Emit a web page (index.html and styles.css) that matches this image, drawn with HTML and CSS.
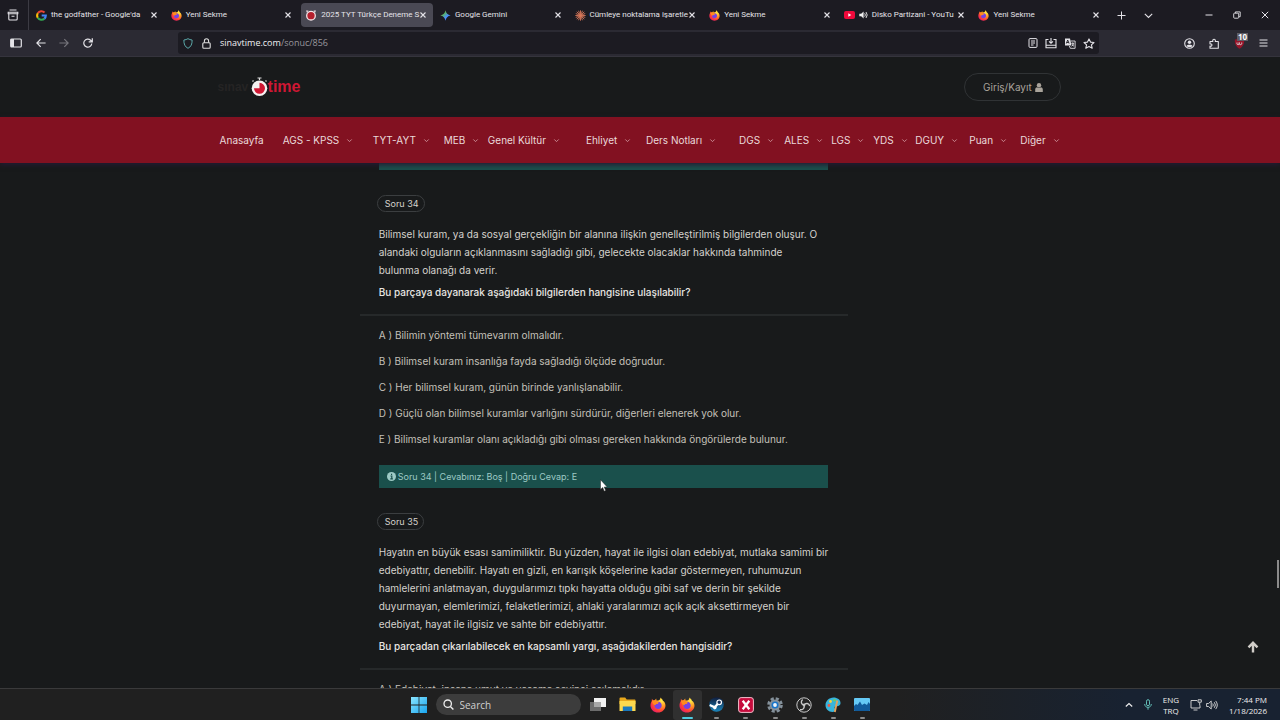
FILE: index.html
```html
<!DOCTYPE html>
<html lang="tr">
<head>
<meta charset="utf-8">
<meta name="viewport" content="width=device-width, initial-scale=1">
<title>2025 TYT Türkçe Deneme Sınavı</title>
<link rel="stylesheet" href="styles.css">
</head>
<body>
<svg class="defs" aria-hidden="true">
  <defs>
    <radialGradient id="fire" cx=".75" cy=".2" r=".95"><stop offset="0" stop-color="#fff04a"/><stop offset=".4" stop-color="#ff9a22"/><stop offset=".72" stop-color="#ff4038"/><stop offset="1" stop-color="#e3166f"/></radialGradient>
    <linearGradient id="win" x2="1" y2="1"><stop offset="0" stop-color="#8be5ff"/><stop offset="1" stop-color="#18a5ef"/></linearGradient>
    <linearGradient id="gem" x2="1" y2="1"><stop offset="0" stop-color="#ef5350"/><stop offset=".35" stop-color="#58b368"/><stop offset=".6" stop-color="#4b8df8"/><stop offset="1" stop-color="#3b7bf0"/></linearGradient>
    <linearGradient id="steamg" x2="0" y2="1"><stop offset="0" stop-color="#101c3c"/><stop offset="1" stop-color="#1b87bd"/></linearGradient>
    <symbol id="firefox" viewBox="0 0 16 16">
      <path fill="url(#fire)" d="M10.1.5c2.2 1.2 2.5 2.5 2.8 3.2.8.2 2.8 2.4 2.6 5.1-.2 3.9-3.4 6.8-7.5 6.8S.5 12.400.5 8.500c0-2.300.8-3.800 1.300-4.500L1.900 1.800l1.400 1.700 1.600-.4L6.200 1.500l.3 1.900h1.700C10.200 3 10.600 1.800 10.100.5z"/>
      <path fill="#7542e5" d="M8 4.800c2.300 0 3.700 1.600 3.700 3.600S10.200 12 8.100 12s-3.700-1.500-3.700-3.400c0-.9.4-1.500.8-1.800l1.900.1c.5 0 .9-.4 1-.8L6.500 5.200z"/>
      <path fill="#ff8a20" d="M1.900 4.100c1.500-1.300 3.500-1 4.700.2l1.700.7c.6.500.3 1.300-.4 1.400l-1.300.4c-.6.200-.5.900-1.300 1.300C3.400 8 2.300 6.500 1.900 4.100z"/>
    </symbol>
    <symbol id="close" viewBox="0 0 8 8"><path d="M1.500 1.500l5 5m0-5l-5 5" stroke="currentColor" stroke-width="1.100" fill="none"/></symbol>
    <symbol id="down" viewBox="0 0 8 8"><path d="M1.500 2.800L4 5.300l2.500-2.500" stroke="currentColor" fill="none"/></symbol>
  </defs>
</svg>

<header class="browser">
  <div class="tabstrip">
    <button class="icon-btn history" aria-label="Sekmeler"><svg width="12" height="12" viewBox="0 0 12 12" fill="none" stroke="currentColor" stroke-width="1.100"><path d="M2.500 1h7M1.200 3.200h9.600v1.600H1.200zM1.800 5v5a1 1 0 0 0 1 1h6.400a1 1 0 0 0 1-1V5M4.500 7.300h3"/></svg></button>
    <div class="tabs" role="tablist">
      <div class="tab" role="tab"><svg width="11" height="11" viewBox="0 0 12 12" fill="none" stroke-width="2.300"><path stroke="#ea4335" d="M2 3.500A4.700 4.700 0 0 1 9.300 2.700"/><path stroke="#fbbc05" d="M2 8.500A4.700 4.700 0 0 1 2 3.500"/><path stroke="#34a853" d="M9.200 9.400A4.700 4.700 0 0 1 2 8.500"/><path stroke="#4285f4" d="M6.200 6h4.500a4.700 4.700 0 0 1-1.500 3.400"/></svg><span class="title">the godfather - Google'da</span><button class="x" aria-label="Kapat"><svg width="8" height="8"><use href="#close"/></svg></button></div>
      <div class="tab" role="tab"><svg width="11" height="11"><use href="#firefox"/></svg><span class="title">Yeni Sekme</span><button class="x" aria-label="Kapat"><svg width="8" height="8"><use href="#close"/></svg></button></div>
      <div class="tab active" role="tab" aria-selected="true"><svg width="12" height="11" viewBox="0 0 12 11"><path d="M1 .5h2.500L2 3zM8.500.5H11L10 3z" fill="#e8d8df"/><circle cx="6" cy="5.700" r="4.300" fill="#b51f2d" stroke="#f3e4e7" stroke-width="1.300"/></svg><span class="title">2025 TYT Türkçe Deneme S</span><button class="x" aria-label="Kapat"><svg width="8" height="8"><use href="#close"/></svg></button></div>
      <div class="tab" role="tab"><svg width="11" height="11" viewBox="0 0 10 10"><path fill="url(#gem)" d="M5 .3C5.500 3 7 4.500 9.700 5 7 5.500 5.500 7 5 9.700 4.500 7 3 5.500.3 5 3 4.500 4.500 3 5 .3z"/></svg><span class="title">Google Gemini</span><button class="x" aria-label="Kapat"><svg width="8" height="8"><use href="#close"/></svg></button></div>
      <div class="tab" role="tab"><svg width="11" height="11" viewBox="0 0 10 10" stroke="#d9775a" stroke-width=".8"><path d="M5 .3v9.400M.3 5h9.400M1.600 1.600l6.800 6.800M8.400 1.600L1.600 8.400M3.200.7l3.600 8.600M6.800.7L3.200 9.300M.7 3.200l8.600 3.600M.7 6.800l8.600-3.600"/></svg><span class="title">Cümleye noktalama işaretle</span><button class="x" aria-label="Kapat"><svg width="8" height="8"><use href="#close"/></svg></button></div>
      <div class="tab" role="tab"><svg width="11" height="11"><use href="#firefox"/></svg><span class="title">Yeni Sekme</span><button class="x" aria-label="Kapat"><svg width="8" height="8"><use href="#close"/></svg></button></div>
      <div class="tab" role="tab"><svg width="11" height="8" viewBox="0 0 11 8"><rect width="11" height="8" rx="2" fill="#f0093b"/><path d="M4.300 2.200v3.600L7.300 4z" fill="#fff"/></svg><svg class="sound" width="9" height="8" viewBox="0 0 9 8"><path fill="#eee" d="M.3 2.700h1.900L4.600.6v6.800L2.200 5.300H.3z"/><path d="M5.700 2.300q1.300 1.700 0 3.400M7 1q2.400 3 0 6" fill="none" stroke="#eee" stroke-width=".9"/></svg><span class="title">Disko Partizani - YouTu</span><button class="x" aria-label="Kapat"><svg width="8" height="8"><use href="#close"/></svg></button></div>
      <div class="tab" role="tab"><svg width="11" height="11"><use href="#firefox"/></svg><span class="title">Yeni Sekme</span><button class="x" aria-label="Kapat"><svg width="8" height="8"><use href="#close"/></svg></button></div>
    </div>
    <div class="strip-tools">
      <button class="icon-btn" aria-label="Yeni sekme"><svg width="9" height="9" viewBox="0 0 9 9"><path d="M4.500.5v8M.5 4.500h8" stroke="currentColor"/></svg></button>
      <button class="icon-btn" aria-label="Tüm sekmeler"><svg width="9" height="9" viewBox="0 0 9 9"><path d="M.8 2.800l3.700 3.700 3.700-3.700" fill="none" stroke="currentColor" stroke-width="1.100"/></svg></button>
    </div>
    <div class="window-tools">
      <button class="icon-btn" aria-label="Küçült"><svg width="8" height="8" viewBox="0 0 8 8"><path d="M.5 4h7" stroke="currentColor"/></svg></button>
      <button class="icon-btn" aria-label="Geri yükle"><svg width="8" height="8" viewBox="0 0 8 8" fill="none" stroke="currentColor" stroke-width=".9"><rect x=".7" y="2.200" width="5" height="5" rx=".8"/><path d="M2.400 2V.9h4.800v4.800H6"/></svg></button>
      <button class="icon-btn" aria-label="Pencereyi kapat"><svg width="8" height="8" viewBox="0 0 8 8"><path d="M.8.8l6.400 6.400m0-6.400L.8 7.200" stroke="currentColor"/></svg></button>
    </div>
  </div>
  <div class="toolbar">
    <div class="nav-tools">
      <button class="icon-btn" aria-label="Kenar çubuğu"><svg width="12" height="10" viewBox="0 0 12 10"><rect x=".7" y="1" width="10.600" height="8" rx="1" fill="none" stroke="currentColor" stroke-width="1.200"/><path fill="currentColor" d="M1 1h3v8H1z"/></svg></button>
      <button class="icon-btn" aria-label="Geri"><svg width="10" height="10" viewBox="0 0 10 10"><path d="M9.600 5H1M4.700 1.200L.9 5l3.800 3.800" fill="none" stroke="currentColor" stroke-width="1.200"/></svg></button>
      <button class="icon-btn dim" aria-label="İleri" disabled><svg width="10" height="10" viewBox="0 0 10 10"><path d="M.4 5H9M5.300 1.200L9.100 5 5.300 8.800" fill="none" stroke="currentColor" stroke-width="1.200"/></svg></button>
      <button class="icon-btn" aria-label="Yenile"><svg width="10" height="10" viewBox="0 0 10 10"><path d="M8.800 5.500A4 4 0 1 1 7.600 2.200L9 3.600M9.300.3v3.600H5.700" fill="none" stroke="currentColor" stroke-width="1.200"/></svg></button>
    </div>
    <div class="urlbar">
      <svg width="10" height="11" viewBox="0 0 10 11"><path d="M5 .7c1.300.8 2.500 1.100 4.100 1.300C9.300 6 8 8.900 5 10.300 2 8.900.7 6 .9 2 2.500 1.800 3.700 1.500 5 .7z" fill="none" stroke="#5ba8a9"/></svg>
      <svg width="9" height="11" viewBox="0 0 9 11" fill="none" stroke="#ddd" stroke-width="1.100"><rect x=".8" y="4.800" width="7.400" height="5.500" rx="1"/><path d="M2.400 4.800V2.900a2.100 2.100 0 0 1 4.200 0v1.900"/></svg>
      <a class="url" href="#"><b>sinavtime.com</b>/sonuc/856</a>
      <div class="url-tools">
        <button class="icon-btn" aria-label="Okuyucu"><svg width="10" height="10" viewBox="0 0 10 10" fill="none" stroke="currentColor"><rect x="1" y=".6" width="8" height="8.800" rx="1"/><path d="M3 3h4M3 5h4M3 7h2.500"/></svg></button>
        <button class="icon-btn" aria-label="Yükle"><svg width="12" height="11" viewBox="0 0 12 11" fill="none" stroke="currentColor" stroke-width="1.100"><path d="M3.500 1.500H1v8.300h10V1.500H8.500M1 7.300h10M6 0v5M4 3.300l2 2 2-2"/></svg></button>
        <button class="icon-btn" aria-label="Çevir"><svg width="12" height="11" viewBox="0 0 12 11"><path fill="currentColor" d="M1 .5h5l1.500 7H1z"/><path d="M2.300 5.500L3.700 2l1.400 3.500M2.700 4.500h2" stroke="#1c1b22" stroke-width=".9" fill="none"/><path d="M6.500 3h4.600v7.300H6.300l-.9-2.300M7.300 5.300H10M8.700 4.500v1M9.600 5.500q-.5 2-2 2.800M8 6.500l2 1.800" stroke="currentColor" stroke-width=".9" fill="none"/></svg></button>
        <button class="icon-btn" aria-label="Yer imi"><svg width="12" height="11" viewBox="0 0 12 11"><path d="M6 .9l1.500 3.200 3.500.4-2.600 2.300.8 3.400L6 8.500l-3.200 1.700.8-3.400L1 4.500l3.500-.4z" fill="none" stroke="currentColor" stroke-width="1.100" stroke-linejoin="round"/></svg></button>
      </div>
    </div>
    <div class="ext-tools">
      <button class="icon-btn" aria-label="Hesap"><svg width="11" height="11" viewBox="0 0 11 11"><circle cx="5.500" cy="5.500" r="4.800" fill="none" stroke="currentColor" stroke-width="1.100"/><circle cx="5.500" cy="4.200" r="1.700" fill="currentColor"/><path fill="currentColor" d="M2.500 8c.5-1.800 5.500-1.800 6 0-1.500 1.600-4.500 1.600-6 0z"/></svg></button>
      <button class="icon-btn" aria-label="Uzantılar"><svg width="11" height="11" viewBox="0 0 11 11"><path d="M1 3.500h2.800c-.7-3 3.200-3 2.500 0h3v6.800H1V8.100c2.600.6 2.600-2.700 0-2.200z" fill="none" stroke="currentColor" stroke-width="1.100" stroke-linejoin="round"/></svg></button>
      <button class="icon-btn ublock" aria-label="Engelleyici"><svg width="11" height="11" viewBox="0 0 11 11"><path fill="#98152a" d="M5.500.3l4.700 1.500c.1 4-1 7-4.700 8.900C1.800 8.800.7 5.800.8 1.800z"/><path d="M3 4.500v1.200c0 1.300 2.200 1.300 2.200 0V4.500v1.200c0 1.300 2.500 1.300 2.500 0V4.500" fill="none" stroke="#ddd" stroke-width=".9"/></svg><span class="count">10</span></button>
      <button class="icon-btn" aria-label="Menü"><svg width="9" height="8" viewBox="0 0 9 8"><path d="M.5 1h8M.5 4h8M.5 7h8" stroke="currentColor"/></svg></button>
    </div>
  </div>
</header>

<div class="page">
  <div class="site-head wrap">
    <a class="logo" href="#" aria-label="sinav time"><span class="logo-dark">sınav</span><svg width="17" height="20" viewBox="0 0 17 20"><path d="M6.500 1h4M8.500 1v2M1.500 4.500l1-1M15.500 4.500l-1-1" stroke="#ddd" stroke-width="1.200"/><circle cx="8.500" cy="11.300" r="7.800" fill="#f5f1f1"/><path fill="#cf1733" d="M8.500 5.800a5.500 5.500 0 1 1-5.500 5.500h5.500z"/></svg><span class="logo-red">time</span></a>
    <a class="login" href="#">Giriş/Kayıt <svg width="8" height="9" viewBox="0 0 8 9"><circle cx="4" cy="2.300" r="2.200" fill="currentColor"/><path fill="currentColor" d="M.2 9V6.500C.2 5 1.500 4.300 2 4.300q2 1 4 0c.5 0 1.800.7 1.800 2.200V9z"/></svg></a>
  </div>
  <nav class="menu">
    <div class="wrap menu-row">
      <a href="#">Anasayfa</a>
      <a href="#">AGS - KPSS<svg><use href="#down"/></svg></a>
      <a href="#">TYT-AYT<svg><use href="#down"/></svg></a>
      <a href="#">MEB<svg><use href="#down"/></svg></a>
      <a href="#">Genel Kültür<svg><use href="#down"/></svg></a>
      <a href="#">Ehliyet<svg><use href="#down"/></svg></a>
      <a href="#">Ders Notları<svg><use href="#down"/></svg></a>
      <a href="#">DGS<svg><use href="#down"/></svg></a>
      <a href="#">ALES<svg><use href="#down"/></svg></a>
      <a href="#">LGS<svg><use href="#down"/></svg></a>
      <a href="#">YDS<svg><use href="#down"/></svg></a>
      <a href="#">DGUY<svg><use href="#down"/></svg></a>
      <a href="#">Puan<svg><use href="#down"/></svg></a>
      <a href="#">Diğer<svg><use href="#down"/></svg></a>
    </div>
  </nav>
  <main class="content">
    <div class="wrap columns">
      <div class="questions">
        <div class="answer previous"></div>
        <section class="question">
          <h2 class="pill">Soru 34</h2>
          <p class="passage">Bilimsel kuram, ya da sosyal gerçekliğin bir alanına ilişkin genelleştirilmiş bilgilerden oluşur. O<br>alandaki olguların açıklanmasını sağladığı gibi, gelecekte olacaklar hakkında tahminde<br>bulunma olanağı da verir.</p>
          <p class="prompt">Bu parçaya dayanarak aşağıdaki bilgilerden hangisine ulaşılabilir?</p>
          <hr>
          <ul class="options">
            <li>A ) Bilimin yöntemi tümevarım olmalıdır.</li>
            <li>B ) Bilimsel kuram insanlığa fayda sağladığı ölçüde doğrudur.</li>
            <li>C ) Her bilimsel kuram, günün birinde yanlışlanabilir.</li>
            <li>D ) Güçlü olan bilimsel kuramlar varlığını sürdürür, diğerleri elenerek yok olur.</li>
            <li>E ) Bilimsel kuramlar olanı açıkladığı gibi olması gereken hakkında öngörülerde bulunur.</li>
          </ul>
          <div class="answer"><svg width="9" height="9" viewBox="0 0 9 9"><circle cx="4.500" cy="4.500" r="4.500" fill="currentColor"/><path d="M3.500 4h1.300v2.700M3.300 6.900h2.600M4 2.300h1.100" stroke="#1a504c" stroke-width="1.200" fill="none"/></svg>Soru 34 | Cevabınız: Boş | Doğru Cevap: E</div>
        </section>
        <section class="question">
          <h2 class="pill">Soru 35</h2>
          <p class="passage">Hayatın en büyük esası samimiliktir. Bu yüzden, hayat ile ilgisi olan edebiyat, mutlaka samimi bir<br>edebiyattır, denebilir. Hayatı en gizli, en karışık köşelerine kadar göstermeyen, ruhumuzun<br>hamlelerini anlatmayan, duygularımızı tıpkı hayatta olduğu gibi saf ve derin bir şekilde<br>duyurmayan, elemlerimizi, felaketlerimizi, ahlaki yaralarımızı açık açık aksettirmeyen bir<br>edebiyat, hayat ile ilgisiz ve sahte bir edebiyattır.</p>
          <p class="prompt">Bu parçadan çıkarılabilecek en kapsamlı yargı, aşağıdakilerden hangisidir?</p>
          <hr>
          <ul class="options">
            <li>A ) Edebiyat, insana umut ve yaşama sevinci aşılamalıdır.</li>
          </ul>
        </section>
      </div>
    </div>
  </main>
  <a class="to-top" href="#" aria-label="Yukarı"><svg width="12" height="12" viewBox="0 0 12 12"><path d="M6 11.500V2M1.500 6.300L6 1.800l4.500 4.500" fill="none" stroke="currentColor" stroke-width="2.400"/></svg></a>
  <div class="scroll-thumb"></div>
</div>

<footer class="taskbar">
  <div class="apps">
    <button class="app wide" aria-label="Başlat"><svg width="16" height="16" viewBox="0 0 16 16" fill="url(#win)"><path d="M0 0h7.600v7.600H0zM8.400 0H16v7.600H8.400zM0 8.400h7.600V16H0zM8.400 8.400H16V16H8.400z"/></svg></button>
    <label class="search"><svg width="11" height="11" viewBox="0 0 11 11"><circle cx="4.700" cy="4.700" r="3.700" fill="none" stroke="#eee" stroke-width="1.300"/><path d="M7.400 7.400l3 3" stroke="#eee" stroke-width="1.400"/></svg><input type="text" placeholder="Search" aria-label="Search"></label>
    <button class="app wide" aria-label="Görev görünümü"><svg width="17" height="15" viewBox="0 0 17 15"><path fill="#f1f1f1" d="M5 1h12v9H5z"/><path fill="#6c6c6c" d="M1 5h11v9H1z"/><path fill="#a8a8a8" d="M5 5h7v5H5z"/></svg></button>
    <button class="app wide" aria-label="Dosya Gezgini"><svg width="17" height="15" viewBox="0 0 17 15"><path fill="#e9a81c" d="M.5 1.500q0-1 1-1h4.700l1.500 2h8q.8 0 .8.800V7H.5z"/><path fill="#fcd84e" d="M.5 4h16v10H.5z"/><path fill="#1a78bd" d="M3.800 14V9.500h9.400V14z"/></svg></button>
    <button class="app wide" aria-label="Firefox"><svg width="16" height="16"><use href="#firefox"/></svg></button>
    <button class="app current" aria-label="Firefox"><svg width="16" height="16"><use href="#firefox"/></svg></button>
    <button class="app open" aria-label="Steam"><svg width="15" height="15" viewBox="0 0 15 15"><circle cx="7.500" cy="7.500" r="7.300" fill="url(#steamg)"/><path d="M.7 8l5 2.300 4-4.600" stroke="#fff" stroke-width="2.200" fill="none"/><circle cx="10.200" cy="5.300" r="2.300" fill="#17305a" stroke="#fff" stroke-width="1.200"/><circle cx="5.800" cy="10.600" r="1.800" fill="#fff"/></svg></button>
    <button class="app open wide" aria-label="X"><svg width="16" height="16" viewBox="0 0 16 16"><rect x=".6" y=".6" width="14.800" height="14.800" rx="2.500" fill="#c60b3c" stroke="#f3c3cf"/><path d="M4.700 3.800l6.600 8.400M11.300 3.800l-6.600 8.400" stroke="#fff" stroke-width="2.300"/></svg></button>
    <button class="app open" aria-label="Ayarlar"><svg width="16" height="16" viewBox="0 0 16 16"><circle cx="8" cy="8" r="6.500" fill="none" stroke="#85919b" stroke-width="2.600" stroke-dasharray="3.100 2"/><circle cx="8" cy="8" r="5.500" fill="#85919b"/><circle cx="8" cy="8" r="3.500" fill="#1875c9"/><circle cx="8" cy="8" r="1.900" fill="#eef4fb"/></svg></button>
    <button class="app open" aria-label="OBS"><svg width="16" height="16" viewBox="0 0 16 16" fill="none" stroke="#c9c9c9"><circle cx="8" cy="8" r="7.200" fill="#252525"/><path d="M8 8C5 7.500 4.500 4.500 6.600 2.500M8 8c1.900-2.400 5-1.800 5.700 1M8 8c1 2.800-1 5.200-4 4.700" stroke-width="1.400"/><circle cx="8" cy="8" r="1" fill="#c9c9c9"/></svg></button>
    <button class="app open" aria-label="Paint"><svg width="16" height="16" viewBox="0 0 16 16"><path fill="#38b5dc" d="M8.500.5c4 0 7 2.300 7 5.500 0 3-2.700 3.300-4.700 3.300-1.300 0-1.500 1-1 2 .8 2-.2 3.700-2.300 3.700C3.500 15 .5 11.800.5 8S4 .5 8.500.5z"/><circle cx="4" cy="8.500" r="1.400" fill="#ed5a46"/><circle cx="5.500" cy="4.500" r="1.400" fill="#f9d342"/><circle cx="9.500" cy="3.300" r="1.300" fill="#6dcf63"/><path d="M12.300 3.500L9.800 15" stroke="#e3a15c" stroke-width="1.900"/></svg></button>
    <button class="app open" aria-label="İzleyici"><svg width="16" height="13" viewBox="0 0 16 13"><rect width="16" height="13" rx="1" fill="#65c9f5"/><path fill="#115b9b" d="M0 8l2-2 1.500 1L6 3.500 8 7l2.500-1.500L13 7l1.500-3L16 6v6q0 1-1 1H1q-1 0-1-1z"/></svg></button>
  </div>
  <div class="tray">
    <svg width="8" height="8" viewBox="0 0 8 8"><path d="M.8 5.500L4 2.500l3.200 3" fill="none" stroke="#eee" stroke-width="1.200"/></svg>
    <svg width="8" height="11" viewBox="0 0 8 11" fill="none" stroke="#63bfb8"><rect x="2.500" y=".7" width="3" height="6" rx="1.500"/><path d="M.7 5c0 4.500 6.600 4.500 6.600 0M4 8.400v2.300"/></svg>
    <div class="lang">ENG<br>TRQ</div>
    <div class="status"><svg width="12" height="12" viewBox="0 0 12 12" fill="none" stroke="#ddd" stroke-width=".9"><path d="M7 1.500H1v7.500h9V6.500M3.500 11h4M9.700 3.500v3M8 .8h3.300v2.400H8z"/></svg><svg width="12" height="10" viewBox="0 0 12 10" fill="none" stroke="#ddd" stroke-width=".9"><path d="M.6 3.500h2L5.200 1v8L2.600 6.500h-2zM6.700 3.500q1.200 1.500 0 3M8.300 2.200q2.200 2.800 0 5.600M9.700.9q3.200 4.100 0 8.200"/></svg></div>
    <time class="clock">7:44 PM<br>1/18/2026</time>
  </div>
</footer>
<svg class="pointer" width="8" height="13" viewBox="0 0 8 13" aria-hidden="true"><path d="M.5.7v9.800l2.200-2 1.500 3.700 1.500-.6-1.500-3.600h3z" fill="#fff" stroke="#222" stroke-width=".5"/></svg>
</body>
</html>
```
FILE: styles.css
```css
* { box-sizing: border-box; }
body {
  margin: 0;
  height: 100vh;
  display: flex;
  flex-direction: column;
  overflow: hidden;
  background: #181a1b;
  color: #d5d2cd;
  font: 10px/18px Inter, "Noto Sans", sans-serif;
}
a { color: inherit; text-decoration: none; }
button { border: 0; padding: 0; background: none; color: inherit; font: inherit; }
svg { display: block; flex: none; }
.defs { position: absolute; width: 0; height: 0; }

/* Browser chrome */
.browser {
  flex: none;
  background: #1c1b22;
  color: #e4e3e8;
  font: 9px/12px "Open Sans", "Noto Sans", sans-serif;
}
.tabstrip { display: flex; align-items: stretch; height: 30px; }
.icon-btn { display: grid; place-items: center; }
.history { width: 29px; padding-right: 3px; border-right: 1px solid #3c3b43; }
.tabs { flex: 1; display: grid; grid-template-columns: repeat(8, minmax(0, 1fr)); padding-left: 1px; }
.tab {
  display: flex;
  align-items: center;
  gap: 4px;
  margin: 3px 1px 3px 2px;
  padding: 0 6px 0 4px;
  border-radius: 4px;
  font-family: Roboto, "Noto Sans", sans-serif;
  font-size: 8px;
}
.tab.active { background: #4a4954; }
.tab .title { flex: 1; min-width: 0; white-space: nowrap; }
.tab .x { flex: none; }
.strip-tools { display: flex; gap: 18px; width: 98px; padding-left: 10px; }
.window-tools { display: flex; justify-content: space-between; width: 75px; padding: 0 11px 0 0; }
.toolbar {
  display: flex;
  align-items: center;
  height: 27px;
  background: #2b2a33;
  border-bottom: 1px solid #35343d;
}
.nav-tools { display: flex; justify-content: space-between; flex: none; width: 93px; margin-right: 85px; padding-left: 10px; }
.dim { opacity: .4; }
.urlbar {
  flex: 1;
  display: flex;
  align-items: center;
  gap: 9px;
  height: 22px;
  padding: 0 4px 0 5px;
  border-radius: 3px;
  background: #1c1b22;
}
.url { flex: 1; color: #98979d; }
.url b { color: #f0eff3; font-weight: 400; }
.url-tools { display: flex; gap: 7px; }
.ext-tools { display: flex; justify-content: space-between; width: 181px; padding: 0 12px 0 85px; }
.ublock { position: relative; }
.count {
  position: absolute;
  left: 3px;
  top: -5px;
  padding: 0 1px;
  background: #5f5e67;
  color: #fff;
  font-size: 8px;
  line-height: 8px;
  font-weight: 700;
}

/* Site */
.page { flex: 1; min-height: 0; position: relative; display: flex; flex-direction: column; }
.wrap { width: 66%; margin: 0 auto; }
.site-head { flex: none; display: flex; align-items: center; justify-content: space-between; height: 60px; }
.logo { display: flex; align-items: center; font: 700 16px/20px "Liberation Sans", sans-serif; }
.logo-dark { width: 33px; color: #252424; font-size: 12px; }
.logo-red { color: #cf1733; }
.login {
  display: flex;
  align-items: center;
  justify-content: center;
  gap: 3px;
  width: 97px;
  height: 28px;
  margin-right: 1px;
  border: 1px solid #303335;
  border-radius: 14px;
  color: #aaa49b;
}
.menu {
  flex: none;
  z-index: 1;
  background: #821121;
  color: #ead9da;
  box-shadow: 0 2px 5px #251a33;
}
.menu-row {
  display: grid;
  grid-template-columns: 63fr 90fr 71fr 44fr 98fr 60fr 93fr 45fr 47fr 42fr 42fr 54fr 51fr 42fr;
  align-items: center;
  height: 46px;
  padding-left: 2px;
}
.menu-row a { display: flex; align-items: center; gap: 7px; white-space: nowrap; }
.menu-row svg { width: 7px; height: 7px; color: #d0959d; }
.content { flex: 1; min-height: 0; overflow: hidden; }
.columns { display: grid; grid-template-columns: 142fr 488fr 214fr; }
.questions { grid-column: 2; }
.question { padding-top: 25px; white-space: nowrap; }
.pill {
  width: max-content;
  margin: 0 0 13px 17px;
  padding: 0 5px 0 7px;
  border: 1px solid #3b3e40;
  border-radius: 9px;
  font-size: 9px;
  line-height: 15px;
  font-weight: 400;
}
.passage, .prompt { margin: 0 0 4px 19px; }
.prompt { margin-bottom: 13px; font-weight: 500; color: #e8e6e3; }
hr { height: 2px; margin: 0; border: 0; background: #26292a; }
.options { list-style: none; margin: 0; padding: 6px 0 13px 19px; line-height: 26px; color: #c4c0b9; }
.answer {
  display: flex;
  align-items: center;
  gap: 2px;
  height: 23px;
  margin: 0 20px 0 19px;
  padding-left: 8px;
  background: #1a504c;
  color: #9dcac5;
  font-size: 9px;
}
.previous { margin-top: -16px; }
.to-top { position: absolute; right: 21px; bottom: 35px; color: #d0cdc8; }
.scroll-thumb { position: absolute; right: 1px; top: 503px; width: 2px; height: 28px; background: #8b8b8b; }

/* Taskbar */
.taskbar {
  flex: none;
  display: grid;
  grid-template-columns: 1fr auto 1fr;
  align-items: center;
  height: 32px;
  border-top: 1px solid #3a3a3b;
  background: linear-gradient(to right, #202020 70%, #182231 88%);
  color: #eee;
  font: 8px/11px "Open Sans", "Noto Sans", sans-serif;
}
.apps { grid-column: 2; display: flex; align-items: center; }
.app { position: relative; display: grid; place-items: center; width: 29px; height: 30px; }
.app.wide { width: 30px; }
.current { background: #303030; border-radius: 3px; }
.open::after, .current::after {
  content: "";
  position: absolute;
  bottom: 1px;
  left: 12px;
  width: 5px;
  height: 2px;
  border-radius: 1px;
  background: #8c8c8c;
}
.current::after { left: 9px; width: 11px; background: #4ccbe0; }
.search {
  display: flex;
  align-items: center;
  gap: 6px;
  width: 145px;
  height: 21px;
  margin: 0 2px;
  padding: 0 7px;
  border-radius: 11px;
  background: #3c3c3c;
}
.search input { flex: 1; min-width: 0; border: 0; padding: 0; background: none; color: #ddd; font: 10px/14px "Open Sans", sans-serif; }
.search input::placeholder { color: #d0d0d0; }
.tray { grid-column: 3; justify-self: end; display: flex; align-items: center; gap: 11px; padding-right: 13px; }
.lang { text-align: center; }
.status { display: flex; align-items: center; gap: 4px; }
.clock { text-align: right; }
.pointer { position: absolute; left: 600px; top: 479px; }
```
